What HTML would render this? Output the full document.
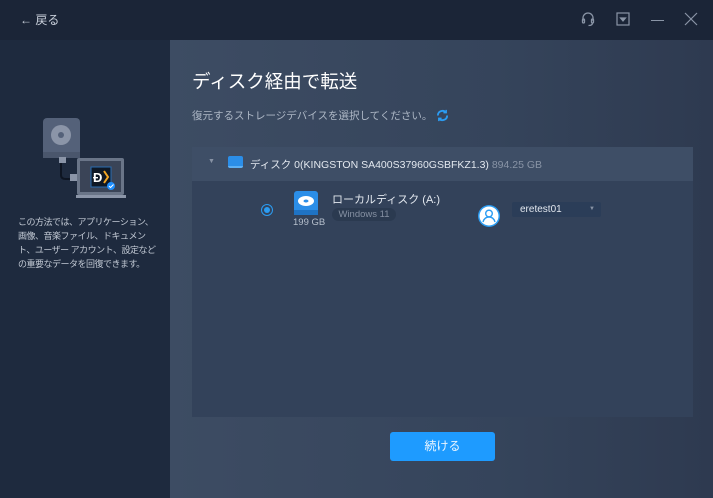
<!DOCTYPE html>
<html><head><meta charset="utf-8"><style>
*{margin:0;padding:0;box-sizing:border-box}
body{width:713px;height:498px;overflow:hidden;font-family:"Liberation Sans","Noto Sans CJK JP",sans-serif;background:#1c2638;position:relative;color:#fff}
.top{position:absolute;left:0;top:0;width:713px;height:40px;background:#1b2537}
.left{position:absolute;left:0;top:40px;width:170px;height:458px;background:#1e2a3e}
.right{position:absolute;left:170px;top:40px;width:543px;height:458px;background:linear-gradient(90deg,#3d4c63,#35445b 60%,#2e3a50)}
.abs{position:absolute}
</style></head><body>
<div class="top">
 <div class="abs" style="left:20px;top:11px;font-size:12px;color:#c9d0db">&#8592; 戻る</div>
 <svg class="abs" style="left:580px;top:11px" width="16" height="16" viewBox="0 0 16 16" fill="none" stroke="#8a95a6" stroke-width="1.3"><path d="M3 10V7a5 5 0 0 1 10 0v3"/><rect x="2.5" y="8" width="2" height="4" rx="1"/><rect x="11.5" y="8" width="2" height="4" rx="1"/><path d="M12.5 12c0 2-2 2.5-4 2.5"/></svg>
 <svg class="abs" style="left:616px;top:12px" width="14" height="14" viewBox="0 0 14 14" fill="none" stroke="#8a95a6" stroke-width="1.2"><rect x="1" y="1" width="12" height="12"/><path d="M4.5 6h5l-2.5 3z" fill="#8a95a6"/></svg>
 <div class="abs" style="left:651px;top:20px;width:13px;height:1px;background:#8a95a6"></div>
 <svg class="abs" style="left:684px;top:12px" width="14" height="14" viewBox="0 0 14 14" stroke="#8a95a6" stroke-width="1.2"><path d="M1 1L13 13M13 1L1 13"/></svg>
</div>
<div class="left">
 <svg class="abs" style="left:40px;top:75px" width="100" height="85" viewBox="0 0 100 85">
  <rect x="3" y="3" width="37" height="40" rx="4" fill="#546179"/>
  <circle cx="21" cy="20" r="10" fill="#8b95a8"/><circle cx="21" cy="20" r="3" fill="#546179"/>
  <rect x="3" y="37" width="37" height="6" fill="#4a566c"/>
  <rect x="19" y="42" width="7" height="6" fill="#8b95a8"/>
  <path d="M21 48v12c0 3 2 4 5 4h8" stroke="#0e1522" stroke-width="2" fill="none"/>
  <rect x="30" y="59" width="7" height="7" fill="#8b95a8"/>
  <rect x="37" y="43" width="47" height="37" rx="2" fill="#6a7588"/>
  <rect x="40" y="46" width="41" height="31" fill="#3a4457"/>
  <rect x="36" y="80" width="50" height="3" fill="#8b95a8"/>
  <rect x="51" y="52" width="20" height="20" fill="#0f1825" stroke="#2a6bb0"/>
  <text x="53" y="67" font-size="13" font-weight="bold" fill="#fff" font-family="Liberation Sans">Ð</text>
  <path d="M64 56l4 6-4 6" stroke="#f5a623" stroke-width="2" fill="none"/>
  <circle cx="71" cy="71" r="4" fill="#1e8fff"/><path d="M69 71l1.5 1.5 3-3" stroke="#fff" fill="none"/>
 </svg>
 <div class="abs" style="left:18px;top:175px;font-size:9px;letter-spacing:-0.5px;line-height:14px;color:#c2c9d4;white-space:nowrap">この方法では、アプリケーション、<br>画像、音楽ファイル、ドキュメン<br>ト、ユーザー アカウント、設定など<br>の重要なデータを回復できます。</div>
</div>
<div class="right">
 <div class="abs" style="left:22px;top:28px;font-size:18.5px;color:#fff">ディスク経由で転送</div>
 <div class="abs" style="left:22px;top:68px;font-size:10.5px;color:#aeb8c6;white-space:nowrap">復元するストレージデバイスを選択してください。</div>
 <svg class="abs" style="left:266px;top:69px" width="13" height="13" viewBox="0 0 14 14" fill="none" stroke="#2b9cf2" stroke-width="2"><path d="M2 7a5 5 0 0 1 9-3M12 7a5 5 0 0 1-9 3"/><path d="M11 1v3h-3M3 13v-3h3" stroke-width="1.5"/></svg>
 <div class="abs" style="left:22px;top:107px;width:501px;height:270px;background:#33425a"></div>
 <div class="abs" style="left:22px;top:107px;width:501px;height:34px;background:#3e4e66"></div>
 <div class="abs" style="left:38px;top:118px;font-size:7px;color:#8893a5">▼</div>
 <div class="abs" style="left:58px;top:116px;width:15px;height:12px;border-radius:2px;background:#2b8ee8;border-bottom:2px solid #5cb0f5"></div>
 <div class="abs" style="left:80px;top:117px;font-size:10.5px;color:#e3e8ef;white-space:nowrap">ディスク 0(KINGSTON SA400S37960GSBFKZ1.3) <span style="color:#8994a6">894.25 GB</span></div>
 <div class="abs" style="left:91px;top:164px;width:12px;height:12px;border-radius:50%;border:1.5px solid #2b9cf2"></div>
 <div class="abs" style="left:94px;top:167px;width:6px;height:6px;border-radius:50%;background:#2b9cf2"></div>
 <svg class="abs" style="left:123px;top:150px" width="26" height="26" viewBox="0 0 26 26"><rect x="1" y="1" width="24" height="24" rx="3" fill="#2b8ee8"/><ellipse cx="13" cy="11" rx="8" ry="5" fill="#fff"/><ellipse cx="13" cy="11" rx="2.5" ry="1.5" fill="#2b8ee8"/><rect x="1" y="20" width="24" height="5" fill="#1f73c4"/></svg>
 <div class="abs" style="left:123px;top:177px;font-size:9.5px;color:#b6bfcc">199 GB</div>
 <div class="abs" style="left:162px;top:151px;font-size:11px;color:#e3e8ef">ローカルディスク (A:)</div>
 <div class="abs" style="left:162px;top:168px;width:64px;height:13px;border-radius:7px;background:#2b3a50;font-size:9.5px;line-height:13px;color:#8590a2;text-align:center">Windows 11</div>
 <svg class="abs" style="left:307px;top:164px" width="24" height="24" viewBox="0 0 24 24"><circle cx="12" cy="12" r="11" fill="#2b9cf2"/><circle cx="12" cy="12" r="9.5" fill="#fff"/><circle cx="12" cy="9.5" r="3.3" fill="none" stroke="#2b9cf2" stroke-width="1.4"/><path d="M6 18c1-3.5 3-5 6-5s5 1.5 6 5" fill="none" stroke="#2b9cf2" stroke-width="1.4"/></svg>
 <div class="abs" style="left:342px;top:162px;width:89px;height:15px;border-radius:2px;background:#2b3d58;font-size:10px;line-height:15px;color:#e3e8ef;padding-left:8px">eretest01<span style="position:absolute;right:6px;font-size:6px;color:#8893a5">▼</span></div>
 <div class="abs" style="left:220px;top:392px;width:105px;height:29px;border-radius:3px;background:#1e9bff;font-size:12px;line-height:29px;text-align:center;color:#eaf5ff">続ける</div>
</div>
</body></html>
